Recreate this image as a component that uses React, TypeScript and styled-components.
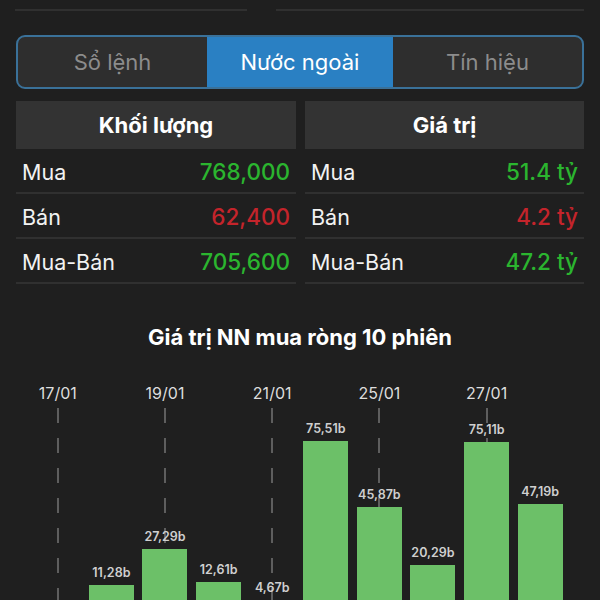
import React from 'react';
import styled, { createGlobalStyle } from 'styled-components';

const colors = {
    background: '#1f1f1f',
    panel: '#2e2e2e',
    header: '#333333',
    line: '#303030',
    accent: '#2a80c3',
    accentBorder: '#3a7199',
    textMuted: '#8c8c8c',
    text: '#f2f2f2',
    up: '#2bb52f',
    down: '#c4242b',
    bar: '#6cc068',
    barLabel: '#cfcfcf',
    dash: '#5e5e5e',
};

const GlobalStyle = createGlobalStyle`
    html, body {
        margin: 0;
        padding: 0;
        background: ${colors.background};
        font-family: Inter, 'Noto Sans', sans-serif;
        color: ${colors.text};
        overflow: hidden;
    }
`;

const Page = styled.div`
    width: 600px;
    padding: 0 16px 0 16px;
    box-sizing: border-box;
    display: flex;
    flex-direction: column;

    & > * {
        flex-shrink: 0;
    }
`;

const TopRow = styled.div`
    display: flex;
    gap: 29px;
    height: 11px;
    margin-left: -1px;
`;

const TopLine = styled.div<{ $width?: number }>`
    ${props => (props.$width ? `width: ${props.$width}px;` : 'flex: 1;')}
    border-bottom: 2px solid ${colors.line};
`;

const Segmented = styled.div`
    margin-top: 24px;
    height: 50px;
    display: flex;
    border: 2px solid ${colors.accentBorder};
    border-radius: 9px;
    overflow: hidden;
    background: ${colors.panel};
`;

const Tab = styled.div<{ $active?: boolean }>`
    flex: ${props => (props.$active ? '0 0 186px' : '1')};
    display: flex;
    align-items: center;
    justify-content: center;
    font-size: 22px;
    color: ${props => (props.$active ? '#ffffff' : colors.textMuted)};
    background: ${props => (props.$active ? colors.accent : 'transparent')};
`;

const Tables = styled.div`
    margin-top: 12px;
    display: flex;
    gap: 9px;
`;

const Table = styled.div<{ $width?: number }>`
    ${props => (props.$width ? `width: ${props.$width}px;` : 'flex: 1;')}
    display: flex;
    flex-direction: column;
`;

const TableHeader = styled.div`
    height: 48px;
    background: ${colors.header};
    display: flex;
    align-items: center;
    justify-content: center;
    font-size: 22px;
    font-weight: 700;
    color: #ffffff;
`;

const Row = styled.div`
    height: 45px;
    display: flex;
    align-items: center;
    justify-content: space-between;
    padding: 2px 6px 0 6px;
    box-sizing: border-box;
    border-bottom: 2px solid ${colors.line};
`;

const RowLabel = styled.span`
    font-size: 21.5px;
    color: ${colors.text};
`;

const RowValue = styled.span<{ $down?: boolean }>`
    font-size: 22.5px;
    font-weight: 500;
    color: ${props => (props.$down ? colors.down : colors.up)};
`;

const ChartTitle = styled.div`
    margin-top: 40px;
    text-align: center;
    font-size: 22px;
    font-weight: 700;
    line-height: 26px;
    color: #ffffff;
`;

const Chart = styled.div`
    margin: 33px 0 0 15px;
    width: 536px;
    display: grid;
    grid-template-columns: repeat(10, 1fr);
`;

const Column = styled.div`
    position: relative;
    height: 227px;
    display: flex;
    flex-direction: column;
    align-items: center;
`;

const DateLabel = styled.div`
    height: 20px;
    line-height: 20px;
    font-size: 16px;
    color: #dddddd;
`;

const Dash = styled.div`
    position: absolute;
    top: 25px;
    left: 50%;
    width: 2px;
    margin-left: -1px;
    background: repeating-linear-gradient(
        to bottom,
        ${colors.dash} 0,
        ${colors.dash} 15px,
        transparent 15px,
        transparent 30px
    );
`;

const BarArea = styled.div`
    flex: 1;
    width: 100%;
    display: flex;
    flex-direction: column;
    align-items: center;
    justify-content: flex-end;
`;

const BarLabel = styled.div`
    position: relative;
    font-size: 12.5px;
    font-weight: 600;
    color: ${colors.barLabel};
    margin-bottom: 5px;
`;

const Bar = styled.div`
    position: relative;
    width: 45px;
    background: ${colors.bar};
`;

const scale = 2.24;

const sessions = [
    { date: '17/01', value: -6.4 },
    { date: '18/01', value: 11.28 },
    { date: '19/01', value: 27.29 },
    { date: '20/01', value: 12.61 },
    { date: '21/01', value: 4.67 },
    { date: '24/01', value: 75.51 },
    { date: '25/01', value: 45.87 },
    { date: '26/01', value: 20.29 },
    { date: '27/01', value: 75.11 },
    { date: '28/01', value: 47.19 },
];

const volume = [
    { label: 'Mua', value: '768,000' },
    { label: 'Bán', value: '62,400', down: true },
    { label: 'Mua-Bán', value: '705,600' },
];

const amount = [
    { label: 'Mua', value: '51.4 tỷ' },
    { label: 'Bán', value: '4.2 tỷ', down: true },
    { label: 'Mua-Bán', value: '47.2 tỷ' },
];

const formatValue = (v: number) => v.toFixed(2).replace('.', ',') + 'b';

const App = () => {
    return (
        <Page>
            <GlobalStyle />
            <TopRow>
                <TopLine $width={232} />
                <TopLine />
            </TopRow>
            <Segmented>
                <Tab>Sổ lệnh</Tab>
                <Tab $active>Nước ngoài</Tab>
                <Tab>Tín hiệu</Tab>
            </Segmented>
            <Tables>
                <Table $width={280}>
                    <TableHeader>Khối lượng</TableHeader>
                    {volume.map(r => (
                        <Row key={r.label}>
                            <RowLabel>{r.label}</RowLabel>
                            <RowValue $down={r.down}>{r.value}</RowValue>
                        </Row>
                    ))}
                </Table>
                <Table>
                    <TableHeader>Giá trị</TableHeader>
                    {amount.map(r => (
                        <Row key={r.label}>
                            <RowLabel>{r.label}</RowLabel>
                            <RowValue $down={r.down}>{r.value}</RowValue>
                        </Row>
                    ))}
                </Table>
            </Tables>
            <ChartTitle>Giá trị NN mua ròng 10 phiên</ChartTitle>
            <Chart>
                {sessions.map((s, i) => {
                    const showDate = i % 2 === 0;
                    const h = Math.max(0, s.value * scale);
                    return (
                        <Column key={s.date}>
                            <DateLabel style={{ visibility: showDate ? 'visible' : 'hidden' }}>{s.date}</DateLabel>
                            {showDate && <Dash style={{ bottom: h }} />}
                            <BarArea>
                                {s.value > 0 && <BarLabel>{formatValue(s.value)}</BarLabel>}
                                {s.value > 0 && <Bar style={{ height: h }} />}
                            </BarArea>
                        </Column>
                    );
                })}
            </Chart>
        </Page>
    );
};

export default App;
